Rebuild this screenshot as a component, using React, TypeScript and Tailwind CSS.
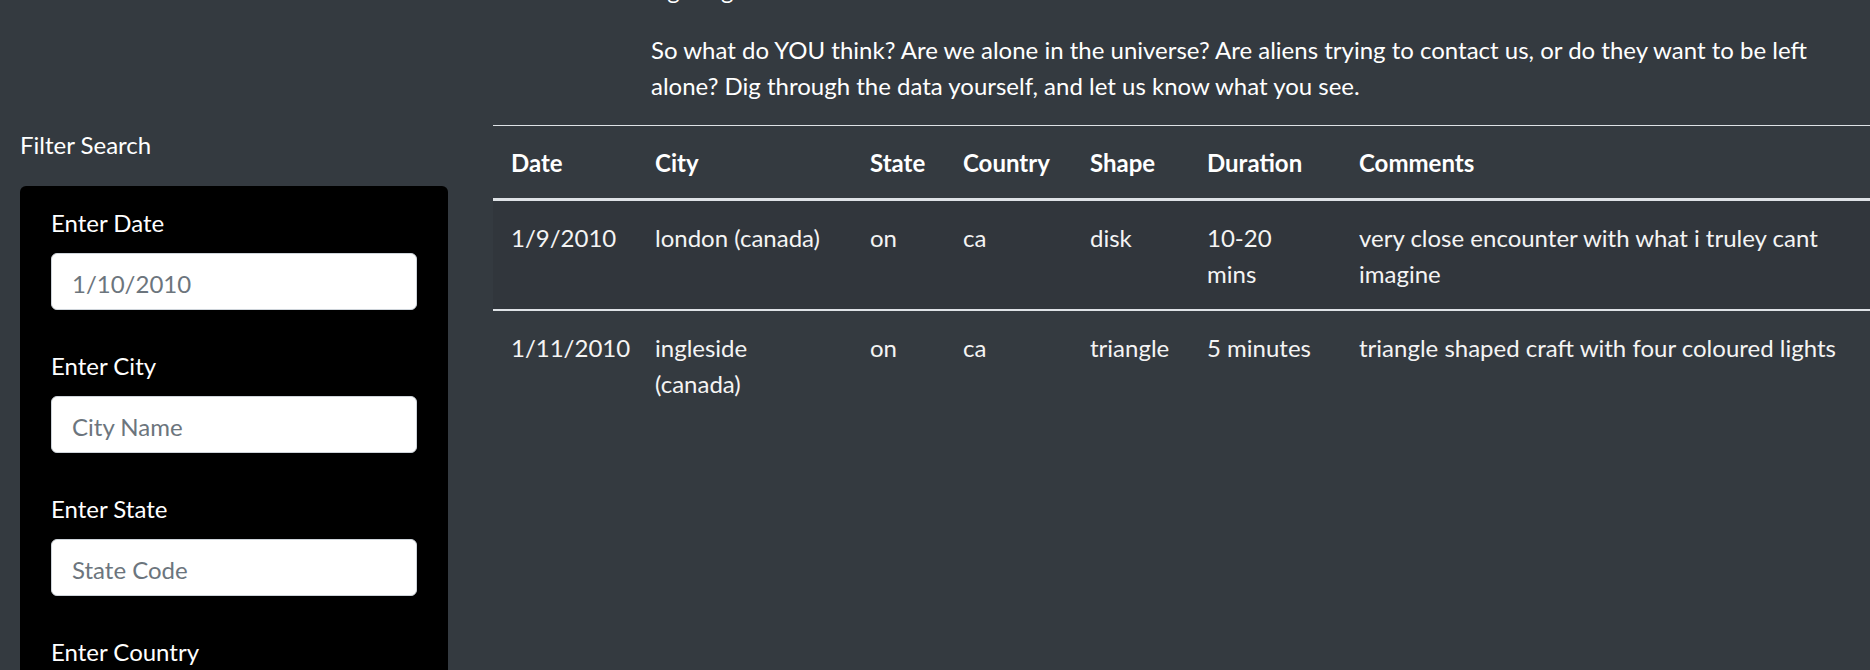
const rows = [
  {
    date: "1/9/2010",
    city: "london (canada)",
    state: "on",
    country: "ca",
    shape: "disk",
    duration: "10-20 mins",
    comments: "very close encounter with what i truley cant imagine",
  },
  {
    date: "1/11/2010",
    city: "ingleside (canada)",
    state: "on",
    country: "ca",
    shape: "triangle",
    duration: "5 minutes",
    comments: "triangle shaped craft with four coloured lights",
  },
];

const fields = [
  { label: "Enter Date", placeholder: "1/10/2010" },
  { label: "Enter City", placeholder: "City Name" },
  { label: "Enter State", placeholder: "State Code" },
  { label: "Enter Country", placeholder: "Country Code" },
];

export default function App() {
  const cell = "px-[18px] pt-[19px] pb-[17px] align-top text-left";

  return (
    <div className="h-[670px] overflow-hidden bg-[#343a40] font-['Segoe_UI',Lato,sans-serif] text-[24px] leading-[36px] text-white">
      {/* intro text, page is scrolled so the previous paragraph is cut off */}
      <div className="ml-[651px] w-[1200px]">
        <p className="mt-[-28px] mb-[24px]">sightings.</p>
        <p className="mb-[21px]">
          So what do YOU think? Are we alone in the universe? Are aliens trying to contact us, or do they want to
          be left alone? Dig through the data yourself, and let us know what you see.
        </p>
      </div>

      <div className="flex">
        {/* filter sidebar */}
        <aside className="w-[493px] shrink-0 pl-[20px] pt-[2px]">
          <div className="w-[428px]">
            <p>Filter Search</p>
            <div className="mt-[23px] rounded-[6px] bg-black px-[31px] pt-[19px] pb-[20px]">
              {fields.map((f) => (
                <div key={f.label} className="mb-[38px]">
                  <label className="mb-[12px] block">{f.label}</label>
                  <input
                    className="block h-[57px] w-full rounded-[6px] border border-[#ced4da] bg-white px-[20px] pt-[3px] text-[24px] text-[#495057] placeholder-[#6c757d] outline-none"
                    placeholder={f.placeholder}
                  />
                </div>
              ))}
            </div>
          </div>
        </aside>

        {/* results */}
        <main className="flex-1">
          <table className="w-[1377px] table-fixed border-collapse">
            <colgroup>
              <col className="w-[144px]" />
              <col className="w-[215px]" />
              <col className="w-[93px]" />
              <col className="w-[127px]" />
              <col className="w-[117px]" />
              <col className="w-[152px]" />
              <col className="w-[529px]" />
            </colgroup>
            <thead>
              <tr className="border-t border-b-[3px] border-t-[#dee2e6] border-b-[#dee2e6]">
                {["Date", "City", "State", "Country", "Shape", "Duration", "Comments"].map((h) => (
                  <th key={h} className={`${cell} font-bold`}>
                    {h}
                  </th>
                ))}
              </tr>
            </thead>
            <tbody>
              {rows.map((r, i) => (
                <tr
                  key={r.date}
                  className={`text-[#f4f4f4] ${i === 0 ? "border-b-2 border-[#dee2e6] bg-[#31363c]" : ""}`}
                >
                  <td className={cell}>{r.date}</td>
                  <td className={cell}>{r.city}</td>
                  <td className={cell}>{r.state}</td>
                  <td className={cell}>{r.country}</td>
                  <td className={cell}>{r.shape}</td>
                  <td className={cell}>{r.duration}</td>
                  <td className={cell}>{r.comments}</td>
                </tr>
              ))}
            </tbody>
          </table>
        </main>
      </div>
    </div>
  );
}
